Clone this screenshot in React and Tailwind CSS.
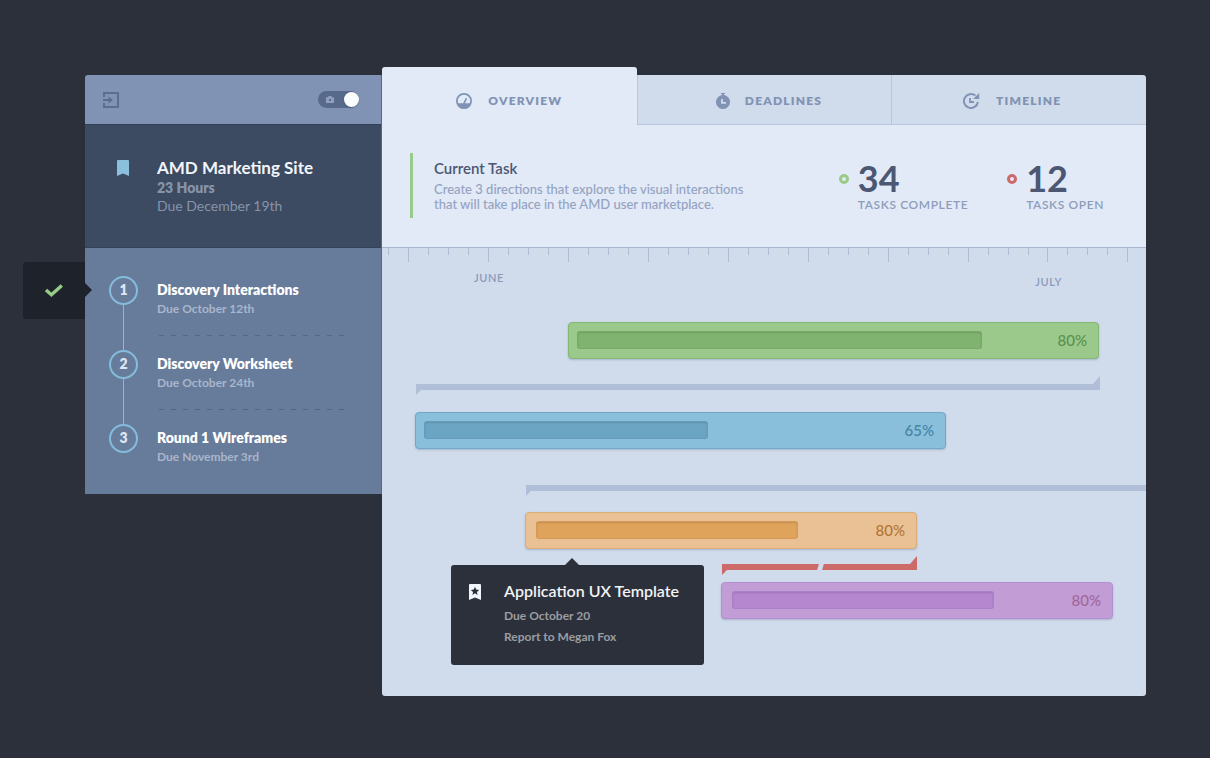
import React, { useState } from 'react';

const SPAN = 764;
const pct = (n) => `${(n / SPAN) * 100}%`;

const STEPS = [
  { id: 1, title: 'Discovery Interactions', due: 'Due October 12th' },
  { id: 2, title: 'Discovery Worksheet', due: 'Due October 24th' },
  { id: 3, title: 'Round 1 Wireframes', due: 'Due November 3rd' },
];

const TICKS = Array.from({ length: 38 }, (_, i) => i);

const GaugeIcon = () => (
  <svg width="16" height="16" viewBox="0 0 16 16" fill="none" aria-hidden="true">
    <circle cx="8" cy="8" r="7.1" stroke="currentColor" strokeWidth="1.8" />
    <path d="M1 10.2H15A7.2 7.2 0 0 1 1 10.2Z" fill="currentColor" />
    <path d="M8 10.4L10.2 5.8" stroke="currentColor" strokeWidth="1.6" strokeLinecap="round" />
  </svg>
);

const StopwatchIcon = () => (
  <svg width="16" height="16" viewBox="0 0 16 16" fill="none" aria-hidden="true">
    <path d="M6 0H10V1H9V2.1A7 7 0 1 1 7 2.1V1H6Z" fill="currentColor" />
    <path d="M7 6V9.8H11" stroke="#d0dbeb" strokeWidth="1.8" />
  </svg>
);

const HistoryIcon = () => (
  <svg width="17" height="16" viewBox="0 0 17 16" fill="none" aria-hidden="true">
    <path d="M14.9 9A7 7 0 1 1 12.4 2.6" stroke="currentColor" strokeWidth="2" />
    <path d="M16.2 0V6H10.2Z" fill="currentColor" />
    <path d="M7 5V9H11" stroke="currentColor" strokeWidth="1.8" />
  </svg>
);

const ExitIcon = () => (
  <svg width="16" height="16" viewBox="0 0 16 16" fill="none" aria-hidden="true">
    <path d="M1 5V1H15V15H1V11" stroke="currentColor" strokeWidth="2" />
    <path d="M0 7H5.5V4.6L9.8 8L5.5 11.4V9H0Z" fill="currentColor" />
  </svg>
);

const TABS = [
  { id: 'overview', label: 'Overview', Icon: GaugeIcon, spacing: 'gap-4' },
  { id: 'deadlines', label: 'Deadlines', Icon: StopwatchIcon, spacing: 'gap-3.5 pl-2' },
  { id: 'timeline', label: 'Timeline', Icon: HistoryIcon, spacing: 'gap-4 pr-3.5' },
];

const Sidebar = () => {
  const [preview, setPreview] = useState(true);

  return (
    <aside className="mt-2 w-[297px] shrink-0 overflow-hidden rounded-tl-[3px] border-r border-[#566886]">
      <header className="flex h-[50px] items-center justify-between border-b border-[#323e52] bg-[#8093b4] pr-[22px] pl-[18px]">
        <button type="button" aria-label="Leave project" className="text-[#5b6e91]">
          <ExitIcon />
        </button>
        <label className="relative flex h-[17px] w-[41px] items-center rounded-full bg-[#586a8b]">
          <input
            type="checkbox"
            role="switch"
            aria-label="Preview"
            checked={preview}
            onChange={(e) => setPreview(e.target.checked)}
            className="peer absolute inset-0 appearance-none rounded-full"
          />
          <svg width="8" height="8" viewBox="0 0 8 8" className="ml-2" aria-hidden="true">
            <path
              fillRule="evenodd"
              d="M2.4 0H5.6V1.2H7.4Q8 1.2 8 1.8V6.4Q8 7 7.4 7H.6Q0 7 0 6.4V1.8Q0 1.2.6 1.2H2.4ZM3 3V5H5V3Z"
              fill="#8f9fbd"
            />
          </svg>
          <span className="ml-1 size-[15px] rounded-full bg-[#fbfcfe] shadow-sm peer-checked:ml-[10px]" />
        </label>
      </header>

      <section className="flex h-[123px] gap-7 border-b border-[#35435a] bg-[#3c4b62] pt-8 pl-8">
        <svg width="12" height="16" viewBox="0 0 12 16" className="mt-[3px]" aria-hidden="true">
          <path d="M1 0H11Q12 0 12 1V16L6 13.4L0 16V1Q0 0 1 0Z" fill="#8bc0dc" />
        </svg>
        <div>
          <h1 className="text-[17px] leading-[22px] font-bold text-[#f2f6fc]">AMD Marketing Site</h1>
          <p className="text-sm leading-[18px] font-extrabold text-[#8793a9]">23 Hours</p>
          <p className="text-sm leading-[18px] text-[#8793a9]">Due December 19th</p>
        </div>
      </section>

      <ol className="bg-[#677b9a] pt-7 pb-7 pl-6">
        {STEPS.map((step, i) => {
          const last = i === STEPS.length - 1;
          return (
            <li key={step.id} className={last ? 'flex gap-[19px]' : 'flex h-[74px] gap-[19px]'}>
              <div className="flex flex-col items-center">
                <span className="flex size-[29px] items-center justify-center rounded-full border-2 border-[#85bcdb] pb-px text-sm font-extrabold text-[#dde6f5]">
                  {step.id}
                </span>
                {!last && <span className="w-px flex-1 bg-[#85bcdb]" />}
              </div>
              <div className="pt-1">
                <h2 className="text-sm leading-5 font-extrabold text-white">{step.title}</h2>
                <p className="text-xs leading-[18px] font-bold text-[#a9b6cb]">{step.due}</p>
                {!last && (
                  <div className="mt-[17px] ml-[2px] h-px w-[187px] bg-[repeating-linear-gradient(90deg,#4f668f_0_5px,transparent_5px_12px)]" />
                )}
              </div>
            </li>
          );
        })}
      </ol>
    </aside>
  );
};

const Tabs = ({ active, onSelect }) => (
  <nav className="flex items-end" role="tablist">
    {TABS.map(({ id, label, Icon, spacing }) => {
      const selected = id === active;
      return (
        <div key={id} className="flex-1">
          <button
            type="button"
            role="tab"
            aria-selected={selected}
            onClick={() => onSelect(id)}
            className={`flex w-full items-center justify-center text-[#8093b4] ${spacing} ${
              selected
                ? 'h-[58px] rounded-t-[3px] bg-[#e2e9f7] pt-2.5'
                : 'h-[50px] border-b border-l border-[#b8c6de] bg-[#d0dbeb] pt-[3px]'
            } ${id === 'timeline' ? 'rounded-tr-[3px]' : ''}`}
          >
            <Icon />
            <span className="text-xs font-extrabold tracking-widest uppercase">{label}</span>
          </button>
        </div>
      );
    })}
  </nav>
);

const Stat = ({ value, label, ring }) => (
  <div className="flex gap-[9px]">
    <span className={`mt-4 size-[10px] rounded-full border-3 ${ring}`} />
    <div>
      <p className="text-4xl leading-10 font-bold text-[#4b5773]">{value}</p>
      <p className="text-xs leading-[14px] font-semibold tracking-wider text-[#8d9dba] uppercase">{label}</p>
    </div>
  </div>
);

const Summary = () => (
  <section className="flex h-[123px] items-start justify-between border-b border-[#a8b6cf] bg-[#e2e9f7] pt-7 pr-[42px] pl-7">
    <div className="h-[65px] border-l-3 border-[#97cb87] pt-[5px] pl-[21px]">
      <h2 className="text-[15px] leading-5 font-semibold text-[#4b5773]">Current Task</h2>
      <p className="mt-1 text-[13px] leading-[15px] font-medium text-[#93a3c1]">
        Create 3 directions that explore the visual interactions
        <br />
        that will take place in the AMD user marketplace.
      </p>
    </div>
    <div className="flex gap-[39px] pt-[5px]">
      <Stat value="34" label="Tasks complete" ring="border-[#97cb87]" />
      <Stat value="12" label="Tasks open" ring="border-[#cc6a69]" />
    </div>
  </section>
);

const Bar = ({ start, length, done, value, tone, fill, pad, children }) => (
  <div
    className={`relative flex h-[37px] items-start rounded border pt-2 shadow-[0_1px_2px_rgba(80,100,140,0.3)] ${tone}`}
    style={{ marginLeft: pct(start), width: pct(length), paddingLeft: pad }}
  >
    <div
      className={`h-[18px] shrink-0 rounded-[3px] border border-black/5 shadow-[inset_0_1px_2px_rgba(0,0,0,0.12)] ${fill}`}
      style={{ width: `${(done / (length - pad - 2)) * 100}%` }}
    />
    <span className="ml-auto pr-[11px] text-[15px] leading-[18px] font-medium">{value}%</span>
    {children}
  </div>
);

const Link = ({ start, length, tone, open, broken }) => (
  <div className={`flex h-[19px] items-start ${tone}`} style={{ marginLeft: pct(start), width: pct(length) }}>
    <svg width="5" height="11" viewBox="0 0 5 11" className="mt-2 shrink-0" aria-hidden="true">
      <path d="M0 0H5V6L0 11Z" fill="currentColor" />
    </svg>
    <div className="mt-2 flex h-[6px] flex-1 justify-center bg-current">
      {broken && <span className="ml-1 h-full w-[5px] -skew-x-[16deg] bg-[#d0dbeb]" />}
    </div>
    {!open && (
      <svg width="7" height="14" viewBox="0 0 7 14" className="shrink-0" aria-hidden="true">
        <path d="M7 0V14H0V8Z" fill="currentColor" />
      </svg>
    )}
  </div>
);

const TaskTooltip = () => (
  <div
    role="tooltip"
    className="absolute top-[52px] -left-[75px] z-10 flex h-[100px] w-[253px] gap-[23px] rounded-[3px] bg-[#2c303a] pt-[15px] pl-[18px]"
  >
    <svg width="14" height="7" viewBox="0 0 14 7" className="absolute -top-[7px] left-[114px]" aria-hidden="true">
      <path d="M0 7L7 0L14 7Z" fill="#2c303a" />
    </svg>
    <svg width="12" height="16" viewBox="0 0 12 16" className="mt-1" aria-hidden="true">
      <path d="M1 0H11Q12 0 12 1V16L6 13.4L0 16V1Q0 0 1 0Z" fill="#f2f6fc" />
      <path
        d="M6 2.8L7.2 5.6L10.2 5.9L7.9 7.9L8.6 10.9L6 9.3L3.4 10.9L4.1 7.9L1.8 5.9L4.8 5.6Z"
        fill="#2c303a"
      />
    </svg>
    <div className="text-[#9b9da2]">
      <h3 className="text-base leading-[22px] font-semibold text-[#f2f3f5]">Application UX Template</h3>
      <p className="mt-[3px] text-xs leading-[21px] font-bold">Due October 20</p>
      <p className="text-xs leading-[21px] font-bold">Report to Megan Fox</p>
    </div>
  </div>
);

const Chart = () => (
  <section className="h-[448px] overflow-hidden rounded-b-[3px] bg-[#d0dbeb]">
    <div className="flex h-[14px] items-start">
      <span className="shrink-0" style={{ width: pct(6) }} />
      {TICKS.map((i) => (
        <span
          key={i}
          className={i % 4 === 1 ? 'h-[14px] shrink-0 border-l border-[#aebdd4]' : 'h-[7px] shrink-0 border-l border-[#aebdd4]'}
          style={{ width: pct(20) }}
        />
      ))}
    </div>
    <div
      className="flex h-[60px] items-start justify-between pt-2 pr-[84px] text-[11px] leading-4 font-semibold tracking-wider text-[#8c9cbe]"
      style={{ paddingLeft: pct(92) }}
    >
      <span>JUNE</span>
      <span className="pt-1">JULY</span>
    </div>

    <Bar start={186} length={531} done={405} value={80} pad={8} tone="border-[#85b873] bg-[#9ac98b] text-[#5b914e]" fill="bg-[#80b370]" />
    <div className="pt-[17px]">
      <Link start={34} length={684} tone="text-[#b0bfd7]" />
    </div>
    <div className="pt-[17px]">
      <Bar start={33} length={531} done={284} value={65} pad={8} tone="border-[#6fa9c8] bg-[#8abfdb] text-[#4484a5]" fill="bg-[#6ca5c3]" />
    </div>
    <div className="pt-7">
      <Link start={144} length={620} tone="text-[#b0bfd7]" open />
    </div>
    <div className="pt-4">
      <Bar start={143} length={392} done={262} value={80} pad={10} tone="border-[#d9ac78] bg-[#eac194] text-[#b27636]" fill="bg-[#dfa35c]">
        <TaskTooltip />
      </Bar>
    </div>
    <div className="pt-[7px]">
      <Link start={340} length={195} tone="text-[#cc6a69]" broken />
    </div>
    <div className="pt-[7px]">
      <Bar start={339} length={392} done={262} value={80} pad={10} tone="border-[#b78fd0] bg-[#c19cd5] text-[#a1679b]" fill="bg-[#b587cf]" />
    </div>
  </section>
);

const App = () => {
  const [tab, setTab] = useState('overview');

  return (
    <main className="flex min-h-screen items-start bg-[#2c303a] pt-[67px] pr-16 pb-[62px] pl-[23px] font-['Lato',sans-serif]">
      <button
        type="button"
        aria-label="Mark as done"
        className="relative z-10 mt-[195px] flex h-[57px] w-[62px] shrink-0 items-center justify-center rounded-l-[3px] bg-[#1e222a]"
      >
        <svg width="20" height="14" viewBox="0 0 20 14" fill="none" aria-hidden="true">
          <path d="M2 6L7.4 10.8L17.8 1.4" stroke="#97cb87" strokeWidth="3.4" />
        </svg>
        <svg width="7" height="14" viewBox="0 0 7 14" className="absolute top-[21px] left-full" aria-hidden="true">
          <path d="M0 0L7 7L0 14Z" fill="#1e222a" />
        </svg>
      </button>
      <Sidebar />
      <div className="min-w-0 flex-1">
        <Tabs active={tab} onSelect={setTab} />
        <Summary />
        <Chart />
      </div>
    </main>
  );
};

export default App;
